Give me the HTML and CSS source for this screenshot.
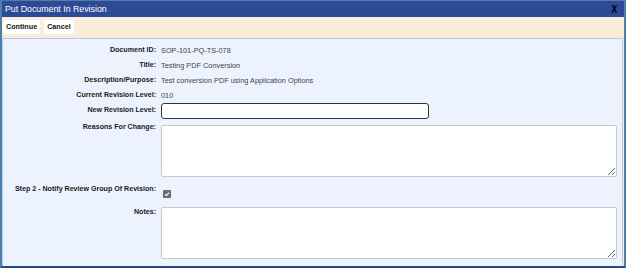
FILE: index.html
```html
<!DOCTYPE html>
<html>
<head>
<meta charset="utf-8">
<link rel="stylesheet" href="styles.css">
</head>
<body>
<div class="dialog">
  <div class="titlebar">
    <span class="title">Put Document In Revision</span>
    <span class="close">X</span>
  </div>
  <div class="toolbar">
    <button class="btn">Continue</button>
    <button class="btn">Cancel</button>
  </div>
  <div class="panel">
    <div class="form">
      <div class="label">Document ID:</div><div class="value">SOP-101-PQ-TS-078</div>
      <div class="label">Title:</div><div class="value">Testing PDF Conversion</div>
      <div class="label">Description/Purpose:</div><div class="value">Test conversion PDF using Application Options</div>
      <div class="label">Current Revision Level:</div><div class="value">010</div>
      <div class="label lbl-input">New Revision Level:</div><div class="value"><input class="text-input" type="text"></div>
      <div class="label lbl-area">Reasons For Change:</div><div class="value"><textarea class="area area-reasons"></textarea></div>
      <div class="label lbl-check">Step 2 - Notify Review Group Of Revision:</div><div class="value check-cell"><span class="check"><svg width="8" height="8" viewBox="0 0 8 8"><path d="M2 4.3 L3.3 5.6 L6 2.6" fill="none" stroke="#fff" stroke-width="1.1"/></svg></span></div>
      <div class="label lbl-area">Notes:</div><div class="value"><textarea class="area area-notes"></textarea></div>
    </div>
  </div>
</div>
</body>
</html>
```
FILE: styles.css
```css
html, body {
  margin: 0;
  padding: 0;
  background: #ffffff;
}
.dialog {
  width: 626px;
  height: 268px;
  box-sizing: border-box;
  border-left: 2px solid #4f7ea6;
  border-right: 2px solid #4f7ea6;
  border-bottom: 2px solid #2c4a7a;
  border-top: 1px solid #4f7ea6;
  background: #faeedb;
  display: flex;
  flex-direction: column;
  font-family: "Liberation Sans", Arial, sans-serif;
}
.titlebar {
  height: 16px;
  background: #2e4a96;
  display: flex;
  align-items: center;
  justify-content: space-between;
  padding: 0 6px 0 3px;
}
.title {
  color: #ffffff;
  font-size: 8.8px;
}
.close {
  color: #000000;
  font-weight: bold;
  font-size: 10px;
  transform: scaleX(0.9);
}
.toolbar {
  height: 19px;
  display: flex;
  align-items: center;
  gap: 4px;
  padding: 0 0 0 1px;
  border-bottom: 1px solid #f3e9d6;
}
.btn {
  font-family: "Liberation Sans", Arial, sans-serif;
  font-size: 7.2px;
  font-weight: bold;
  color: #111;
  background: #ffffff;
  border: none;
  border-radius: 3px;
  height: 14px;
  padding: 0 3px;
  margin: 0;
}
.panel {
  flex: 1;
  background: #edf3fe;
  border: 1px solid #b9c9e4;
  border-bottom: none;
  margin: 1px 1px 0 0;
  padding: 4px 0 0 0;
}
.form {
  display: grid;
  grid-template-columns: 153px 1fr;
  column-gap: 5px;
  row-gap: 0;
  align-items: start;
}
.label {
  text-align: right;
  font-weight: bold;
  font-size: 7.1px;
  color: #1a1a1a;
  line-height: 15px;
}
.value {
  font-size: 7.35px;
  color: #444;
  line-height: 15px;
  min-height: 15px;
}
.lbl-input {
  line-height: 14px;
}
.lbl-area {
  padding-top: 1px;
}
.lbl-check {
  padding-top: 5px;
}
.text-input {
  display: block;
  box-sizing: border-box;
  width: 268px;
  height: 16px;
  border: 1px solid #333;
  border-radius: 3px;
  background: #fff;
  margin: 0;
  padding: 0;
}
.area {
  display: block;
  box-sizing: border-box;
  width: 456px;
  height: 52px;
  border: 1px solid #c9c9c9;
  border-radius: 2px;
  background: #fff;
  margin: 0;
  padding: 0;
  resize: vertical;
}
.area-reasons {
  margin-top: 6px;
}
.area-notes {
  margin-top: 3px;
}
.check-cell {
  min-height: 27px;
}
.check {
  display: flex;
  align-items: center;
  justify-content: center;
  width: 8px;
  height: 8px;
  margin: 13px 0 0 2px;
  background: #6d6d6d;
  border-radius: 1px;
}
```
